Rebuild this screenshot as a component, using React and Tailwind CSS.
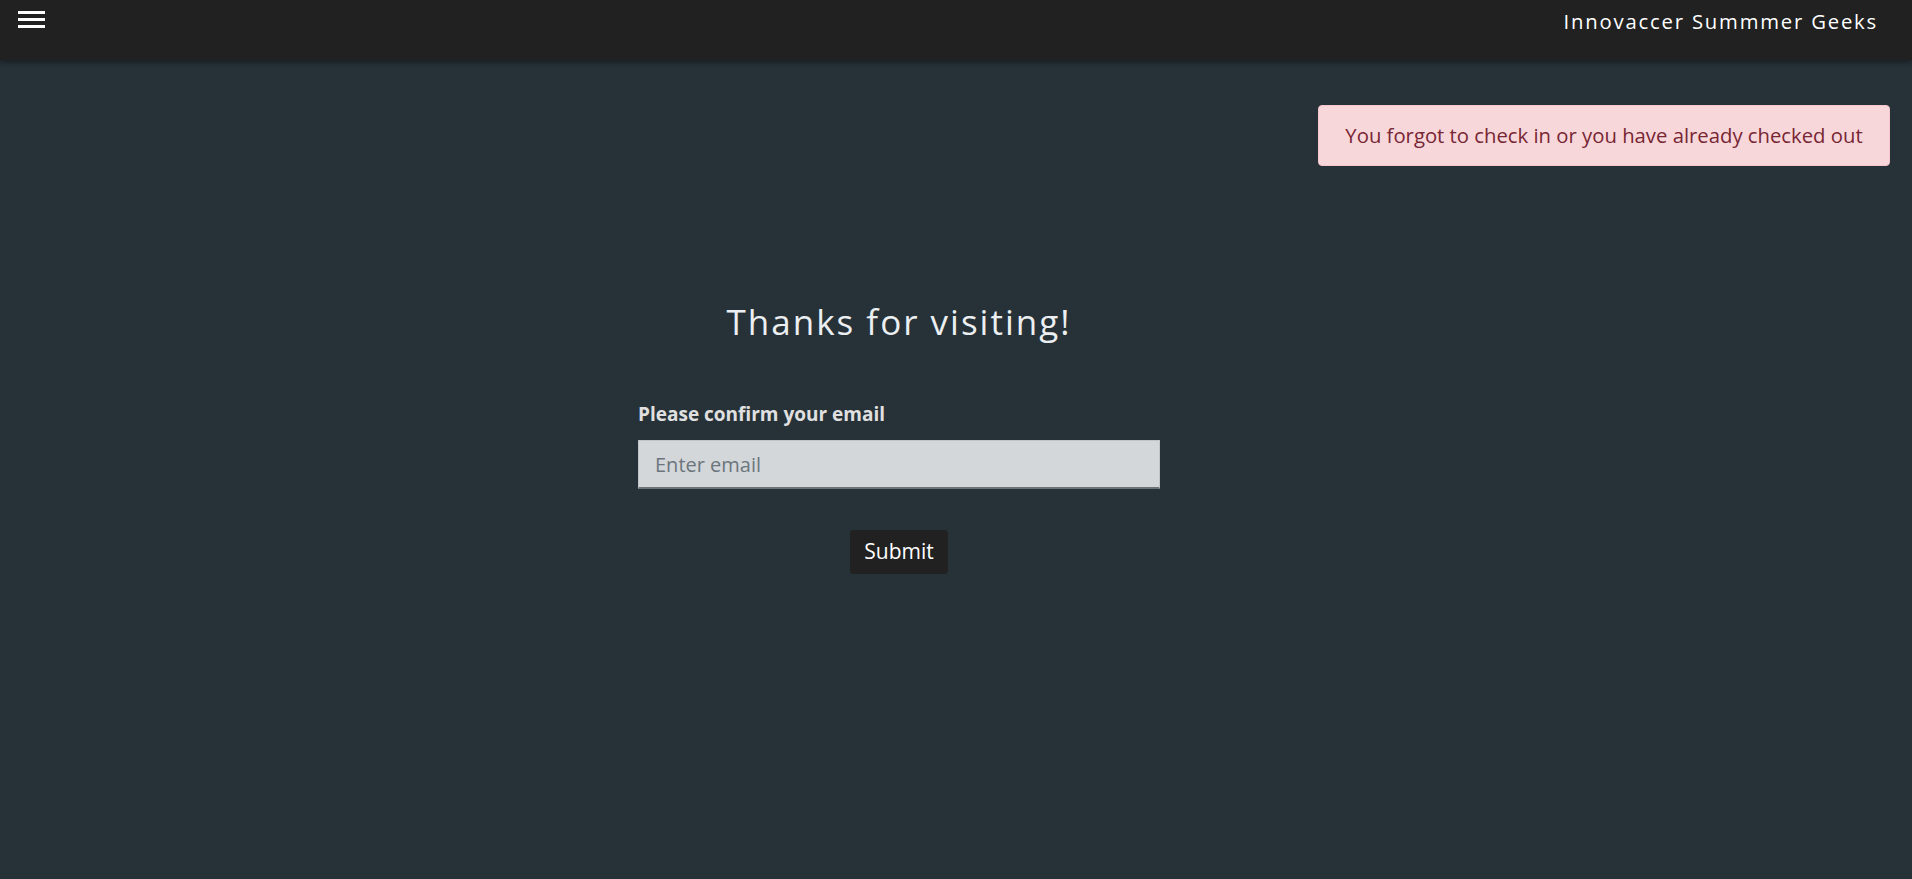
export default function App() {
  return (
    <div
      className="min-h-screen w-full bg-[#263238] text-white"
      style={{ fontFamily: '"Open Sans", "DejaVu Sans", sans-serif' }}
    >
      {/* top bar */}
      <header className="h-[60px] bg-[#212121] shadow-[0_2px_6px_rgba(0,0,0,0.45)] flex items-start justify-between">
        <button className="mt-[11px] ml-[18px] flex flex-col gap-[4px]">
          <span className="block w-[27px] h-[3px] bg-white" />
          <span className="block w-[27px] h-[3px] bg-white" />
          <span className="block w-[27px] h-[3px] bg-white" />
        </button>
        <div className="mt-[6px] mr-[34px] text-[20.3px] tracking-[1.8px] text-white">
          Innovaccer Summmer Geeks
        </div>
      </header>

      {/* alert */}
      <div className="flex justify-end pr-[22px] pt-[45px]">
        <div className="w-[572px] h-[61px] rounded-[4px] bg-[#f8d7da] border border-[#f5c6cb] text-[#772634] text-[20.3px] flex items-center justify-center">
          You forgot to check in or you have already checked out
        </div>
      </div>

      {/* form */}
      <div className="ml-[638px] w-[522px] pt-[135px] flex flex-col">
        <h1 className="text-center text-[35px] tracking-[2px] leading-[42px] text-[#eceff1]">
          Thanks for visiting!
        </h1>
        <label className="mt-[58px] text-[19px] font-bold text-[#e0e0e0] leading-[26px]">
          Please confirm your email
        </label>
        <input
          type="email"
          placeholder="Enter email"
          className="mt-[13px] h-[49px] w-full bg-[#d3d7d9] border border-[#c0c4c6] border-b-2 border-b-[#6b7378] px-[16px] text-[20px] text-[#333] placeholder:text-[#6c757d] outline-none"
        />
        <div className="flex justify-center mt-[41px]">
          <button className="h-[44px] w-[98px] rounded-[4px] bg-[#212121] text-white text-[21px]">
            Submit
          </button>
        </div>
      </div>
    </div>
  );
}
